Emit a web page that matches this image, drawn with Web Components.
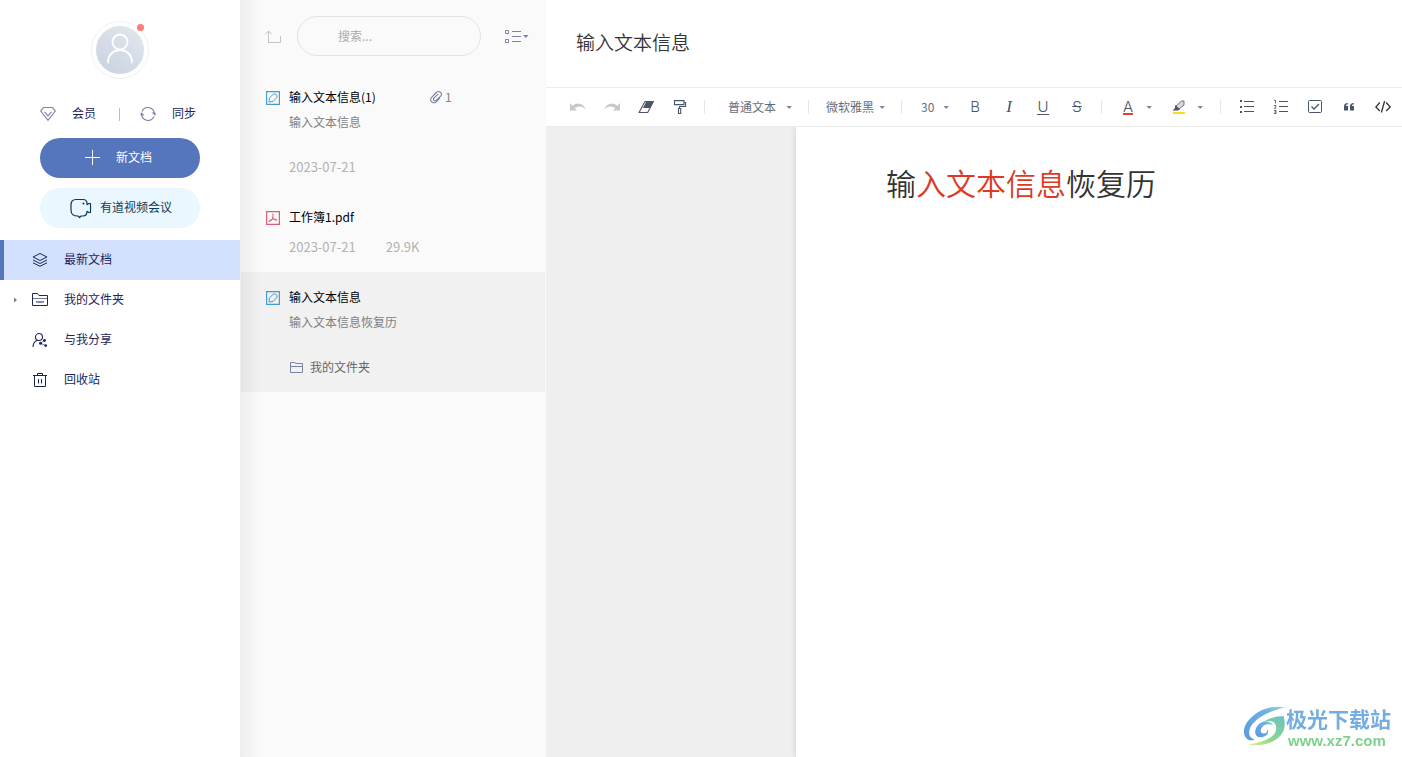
<!DOCTYPE html>
<html lang="zh-CN">
<head>
<meta charset="utf-8">
<title>笔记</title>
<style>
  html, body { margin: 0; height: 100%; }
  body {
    font: 12px/20px "Noto Sans CJK SC", sans-serif;
    background: #fff;
    color: #1b2559;
    --accent: #5575bd;
    --line: #ececec;
  }
</style>
</head>
<body>
<yn-app></yn-app>

<script>
const ICONS = {
  gem: [16, 16, '<path fill="none" stroke="currentColor" stroke-width="1.1" d="M3.5 1.5h9l2.8 3.6L8 14.3.7 5.1zM4.6 5.8 8 9.8l3.4-4"/>'],
  sync: [16, 16, '<path fill="none" stroke="currentColor" stroke-width="1.1" d="M2 5.4A6.5 6.5 0 0 1 14.4 8M14 10.6A6.5 6.5 0 0 1 1.6 8"/><path fill="currentColor" d="m11.600 6.600 4 0-.2 3.400zM4.600 9.200.5 9.600l.4-3.600z"/>'],
  plus: [16, 16, '<path fill="none" stroke="currentColor" d="M8.5 0v15M1 7.5h15"/>'],
  meeting: [24, 22, '<path fill="none" stroke="currentColor" stroke-width="1.200" stroke-linejoin="round" d="M8 2.500h7c2.500 0 4 1.500 4 4v1.200l1.800-1.200h1.700v9h-1.700L19 14.300c0 3-1.500 4.700-4 4.700H13L11.500 20.500 10 19c-4.500 0-7-1.500-7-6V8.500c0-4 1.500-6 5-6z"/><circle cx="15.500" cy="6.500" r="1" fill="currentColor"/>'],
  layers: [16, 16, '<path fill="none" stroke="currentColor" stroke-linejoin="round" d="M8 1.500 15 5 8 8.500 1 5zM1 8l7 3.500L15 8M1 10.800l7 3.500 7-3.500"/>'],
  folderLines: [16, 16, '<path fill="none" stroke="currentColor" d="M.5 13.500v-12h5l1.500 2h8.500v10zM4 10h8"/><path stroke="currentColor" opacity=".6" d="M.5 6.500h15"/>'],
  share: [16, 16, '<g fill="none" stroke="currentColor" stroke-width="1.100"><circle cx="7" cy="5" r="3.500"/><path d="M1 15C1 11.400 2.800 9.400 5.200 8.200"/><path stroke-width=".6" d="m8.500 11.200 4-2.700M8.500 11.200l5 2.400"/></g><g fill="currentColor"><circle cx="12.500" cy="8.500" r="1.400"/><circle cx="8.500" cy="11.200" r="1.500"/><circle cx="13.700" cy="13.600" r="1.400"/></g>'],
  trash: [16, 16, '<path fill="none" stroke="currentColor" d="M1 3.500h14M5.500 3V1.500h5V3M2.500 3.500v11h11v-11M6.500 7v4.500M9.500 7v4.500"/>'],
  caretRight: [8, 8, '<path fill="currentColor" d="M2 1.500v5l3-2.500z"/>'],
  caretDown: [8, 8, '<path fill="currentColor" d="M1.500 3h5.500L4.200 6z"/>'],
  up: [18, 16, '<path fill="none" stroke="currentColor" d="M1 5.500 4.500 2 8 5.500M4.500 2v11.500h12V7"/>'],
  view: [24, 16, '<path fill="none" stroke="currentColor" d="M.5 1.500h3v3h-3zM.5 10.500h3v3h-3zM7 2.500h9M7 7.500h9M7 12.500h9"/><path fill="currentColor" d="M18 6h5.500l-2.700 3z"/>'],
  note: [14, 14, '<path fill="none" stroke="currentColor" stroke-width="1.200" d="M.6.600h12.800v12.800H.6z"/><path fill="none" stroke="currentColor" d="m3 11 .4-4.200L7.600 3c2-.8 4 1.200 3.400 3.200L7 10.500z"/>'],
  pdf: [14, 14, '<path fill="none" stroke="currentColor" stroke-width="1.200" d="M.6.600h12.800v12.800H.6z"/><path fill="none" stroke="currentColor" d="M6.200 2.800c1.500 0 .8 2.200.6 3.400-.4 2-2 4.500-3.600 4.600-.8-.6.600-2 3.300-2.500 2.200-.4 4.500-.2 4.400.9-1.400.700-3.800-1-4.600-3.500"/>'],
  clip: [14, 14, '<path fill="none" stroke="currentColor" stroke-width="1.100" stroke-linecap="round" d="M10.700 8.200 7.200 11.800C4 14.600-.2 10.700 2.600 7.400L7.400 2.500c2.500-2.500 6.500.6 4.500 3.500L7.200 10.300c-1.700 1.500-3.700-.6-2.300-2.200L8.800 4.300"/>'],
  folder: [14, 14, '<path fill="none" stroke="currentColor" d="M1.500 12.500v-10h4l1.500 1h6.500v9zM1.500 6.500h12"/>'],
  undo: [16, 16, '<path fill="currentColor" d="M0 4v7.500h7L4.600 9C8.500 6.500 12.500 7 16 10.500 13.500 4.500 7.500 2.700 2.600 6.800z"/>'],
  redo: [16, 16, '<path fill="currentColor" d="M16 4v7.500H9L11.400 9C7.500 6.500 3.500 7 0 10.500 2.500 4.500 8.500 2.700 13.400 6.800z"/>'],
  eraser: [16, 16, '<path fill="none" stroke="currentColor" stroke-width="1.100" stroke-linejoin="round" d="M7 2.500h8.300L9.700 13.500H1z"/><path fill="currentColor" d="M7 2h9l-4 7H5L8 3z"/>'],
  roller: [16, 16, '<path fill="none" stroke="currentColor" stroke-width="1.100" d="M2.500 1.600h9.500v4H2.500zM12 3.500h1.600v4H7.500V9M6.500 9.500h2.200v5H6.500z"/>'],
  highlight: [16, 16, '<path fill="#d8d8d8" stroke="#4a5568" stroke-width=".8" d="M5 7 10.500 2H13v4L8 10z"/><path fill="#4a5568" d="m4 6 5 4.500-2 1H1.500L4 9z"/><path fill="#f8df1e" d="M2 13h12v2H2z"/>'],
  ul: [16, 16, '<path fill="currentColor" d="M1 1h2v2H1zM1 7h2v2H1zM1 12h2v2H1z"/><path stroke="currentColor" d="M5 2.500h10M5 7.500h10M5 12.500h10"/>'],
  ol: [16, 16, '<path stroke="currentColor" d="M6 2.500h9M6 7.500h9M6 12.500h9"/><path fill="none" stroke="currentColor" stroke-width=".9" d="M1 1.400h1.500v3M1 6.500h2v1l-1.700 1.700H3.300M1 11.500h2v3H1M1.500 13H3"/>'],
  check: [16, 16, '<rect x="1.500" y="1.500" width="13" height="12" rx="1" fill="none" stroke="currentColor"/><path fill="none" stroke="currentColor" stroke-width="1.300" d="M4.500 7.500 7 10l5-5"/>'],
  quote: [16, 16, '<path fill="currentColor" d="M3 7.500C3 5.500 4.200 4 6.800 4v1.200C5.500 5.300 5 6 5 7h2v4.500H3zM9 7.500C9 5.500 10.200 4 12.800 4v1.200C11.500 5.300 11 6 11 7h2v4.500H9z"/>'],
  code: [16, 16, '<path fill="none" stroke="currentColor" stroke-width="1.300" d="M4.800 3.500.8 8l4 4M11.200 3.500l4 4.500-4 4M9.600 2 6.400 13.500"/>']
};

function define(name, html, setup) {
  const tpl = document.createElement('template');
  tpl.innerHTML = html;
  customElements.define(name, class extends HTMLElement {
    constructor() {
      super();
      this.attachShadow({ mode: 'open' }).append(tpl.content.cloneNode(true));
    }
    connectedCallback() { if (setup) setup(this, this.shadowRoot); }
  });
}

define('yn-icon', `<style>:host{display:block;flex:none}svg{display:block}</style><div></div>`, (el, root) => {
  const [w, h, body] = ICONS[el.getAttribute('name')];
  root.querySelector('div').innerHTML =
    `<svg width="${w}" height="${h}" viewBox="0 0 ${w} ${h}" aria-hidden="true">${body}</svg>`;
});

define('yn-avatar', `
<style>
  :host { display: block; position: relative; width: 56px; height: 56px; border: 1px solid #f0f0f8; border-radius: 50%; }
  svg { display: block; margin: 4px; }
  i { position: absolute; top: 2px; right: 4px; width: 7px; height: 7px; border-radius: 50%; background: #ff7b79; }
</style>
<svg width="48" height="48" viewBox="0 0 48 48" aria-hidden="true">
  <defs><linearGradient id="g" x1="1" y1="0" x2=".3" y2="1"><stop offset="0" stop-color="#e4e8ee"/><stop offset="1" stop-color="#cbd4e1"/></linearGradient></defs>
  <circle cx="24" cy="24" r="24" fill="url(#g)"/>
  <g fill="none" stroke="#fff" stroke-width="1.800" stroke-linecap="round"><circle cx="24" cy="16" r="7.500"/><path d="M12 36.500C12 20 36 20 36 36.500"/></g>
</svg><i></i>`);

define('yn-nav-item', `
<style>
  :host { display: block; }
  a { display: flex; align-items: center; height: 40px; border-left: 4px solid transparent; color: #1b2559; text-decoration: none; }
  :host([active]) a { background: #d3e1ff; border-color: var(--accent); }
  .caret { width: 20px; padding-left: 8px; color: #7a819c; visibility: hidden; }
  :host([expandable]) .caret { visibility: visible; }
  slot { display: block; }
  .text { margin-left: 16px; padding-bottom: 2px; }
</style>
<a href="#"><span class="caret"><yn-icon name="caretRight"></yn-icon></span><span class="icon"></span><span class="text"><slot></slot></span></a>`,
(el, root) => { root.querySelector('.icon').innerHTML = `<yn-icon name="${el.getAttribute('icon')}"></yn-icon>`; });

define('yn-sidebar', `
<style>
  :host { display: flex; flex-direction: column; background: #fff; }
  yn-avatar { margin: 21px auto 0; }
  .quick { display: flex; align-items: center; margin: 25px 40px 0; height: 20px; }
  button { display: flex; align-items: center; border: 0; padding: 0; background: none; color: #1b2559; font: inherit; cursor: pointer; }
  button span { padding-bottom: 2px; }
  .quick yn-icon { color: #7b83a3; }
  .quick button { gap: 16px; }
  .quick hr { width: 1px; height: 13px; border: 0; margin: 0 20px 0 23px; background: #bbb; }
  .big { height: 40px; margin: 10px 40px 0; border-radius: 20px; justify-content: center; }
  .new { margin-top: 14px; gap: 16px; background: var(--accent); color: #fff; padding-right: 4px; }
  .meet { gap: 8px; background: #ebf7ff; color: #0f3a57; }
  nav { margin-top: 12px; }
</style>
<yn-avatar></yn-avatar>
<div class="quick">
  <button><yn-icon name="gem"></yn-icon><span>会员</span></button><hr>
  <button><yn-icon name="sync"></yn-icon><span>同步</span></button>
</div>
<button class="big new"><yn-icon name="plus"></yn-icon><span>新文档</span></button>
<button class="big meet"><yn-icon name="meeting"></yn-icon><span>有道视频会议</span></button>
<nav>
  <yn-nav-item icon="layers" active>最新文档</yn-nav-item>
  <yn-nav-item icon="folderLines" expandable>我的文件夹</yn-nav-item>
  <yn-nav-item icon="share">与我分享</yn-nav-item>
  <yn-nav-item icon="trash">回收站</yn-nav-item>
</nav>`);

define('yn-note-item', `
<style>
  :host { display: flex; gap: 9px; margin: 0 1px; padding: 15px 25px; }
  :host([selected]) { background: #f1f1f1; }
  .type { margin-top: 4px; color: #459bd8; }
  :host([kind="pdf"]) .type { color: #dc5f78; }
  .body { flex: 1; }
  .head { display: grid; grid-template-columns: 140px auto; color: #000; }
  ::slotted([slot="extra"]) { display: flex; align-items: center; gap: 2px; color: #7b83a3; }
  ::slotted([slot="summary"]) { display: block; padding: 5px 0 15px; color: #808080; }
  ::slotted([slot="meta"]) { display: flex; align-items: center; margin-top: 10px; gap: 30px; font-size: 13px; color: #b2b2b2; }
  ::slotted([slot="path"]) { display: flex; align-items: center; margin-top: 10px; gap: 7px; color: #666; }
</style>
<span class="type"></span>
<div class="body"><div class="head"><slot></slot><slot name="extra"></slot></div><slot name="summary"></slot><slot name="meta"></slot><slot name="path"></slot></div>`,
(el, root) => { root.querySelector('.type').innerHTML = `<yn-icon name="${el.getAttribute('kind')}"></yn-icon>`; });

define('yn-note-list', `
<style>
  :host { display: block; position: relative; background: #fafafa; }
  :host::after { content: ""; position: absolute; inset: 0 auto 0 0; width: 22px; pointer-events: none; background: linear-gradient(90deg, rgba(0,0,0,.05), rgba(0,0,0,0)); }
  header { display: flex; align-items: center; height: 72px; padding: 0 17px 0 24px; box-sizing: border-box; }
  .plain { border: 0; padding: 1px 0 0; background: none; color: #7b83a3; }
  .up { color: #c4c4c4; }
  input { flex: 1; min-width: 0; height: 40px; box-sizing: border-box; margin: 0 24px 0 15px; padding: 0 40px 2px; border: 1px solid #e4e4e4; border-radius: 20px; background: transparent; font: inherit; outline: none; }
  input::placeholder { color: #ababab; }
  .count { color: #8a8178; }
  .place { color: #7b83a3; }
</style>
<header>
  <button class="plain up" aria-label="上级目录"><yn-icon name="up"></yn-icon></button>
  <input type="search" placeholder="搜索..." aria-label="搜索">
  <button class="plain" aria-label="视图"><yn-icon name="view"></yn-icon></button>
</header>
<yn-note-item kind="note">输入文本信息(1)<span slot="extra"><yn-icon name="clip"></yn-icon><span class="count">1</span></span><span slot="summary">输入文本信息</span><span slot="meta">2023-07-21</span></yn-note-item>
<yn-note-item kind="pdf">工作簿1.pdf<span slot="meta"><span>2023-07-21</span><span>29.9K</span></span></yn-note-item>
<yn-note-item kind="note" selected>输入文本信息<span slot="summary">输入文本信息恢复历</span><span slot="path"><yn-icon class="place" name="folder"></yn-icon>我的文件夹</span></yn-note-item>`);

define('yn-toolbar', `
<style>
  :host { display: flex; align-items: center; height: 38px; padding-left: 15px; border-bottom: 1px solid var(--line); color: #4a5568; overflow: hidden; }
  button { flex: none; display: flex; align-items: center; justify-content: center; width: 34px; height: 32px; border: 0; padding: 0; background: none; color: inherit; font: 300 15px/16px Inter, sans-serif; }
  button:disabled { color: #c8c8c8; }
  hr { flex: none; width: 1px; height: 14px; border: 0; margin: 0 9px 0 7px; background: #e6e6e6; }
  .pick { position: relative; flex: none; display: flex; align-items: center; box-sizing: border-box; }
  .style { width: 87px; padding-left: 14px; }
  .font { width: 76px; padding-left: 8px; }
  .size { width: 47px; padding-left: 10px; }
  select { appearance: none; border: 0; padding: 0; margin: 0; width: 100%; background: none; color: #666d7c; font: inherit; height: 20px; }
  .pick yn-icon { position: absolute; right: 8px; pointer-events: none; }
  yn-icon[name="caretDown"] { color: #8088a0; }
  .drop { width: 17px; justify-content: flex-start; }
  .i { font: italic 17px/16px "Liberation Serif", serif; }
  .u span { border-bottom: 1px solid; line-height: 14px; }
  .s { text-decoration: line-through; }
  .a span { border-bottom: 2px solid #e2402b; line-height: 13px; }
  .code { color: #333; }
</style>
<button disabled aria-label="撤销"><yn-icon name="undo"></yn-icon></button>
<button disabled aria-label="重做"><yn-icon name="redo"></yn-icon></button>
<button aria-label="清除格式"><yn-icon name="eraser"></yn-icon></button>
<button aria-label="格式刷"><yn-icon name="roller"></yn-icon></button>
<hr>
<span class="pick style"><select aria-label="段落样式"><option>普通文本</option></select><yn-icon name="caretDown"></yn-icon></span>
<hr>
<span class="pick font"><select aria-label="字体"><option>微软雅黑</option></select><yn-icon name="caretDown"></yn-icon></span>
<hr>
<span class="pick size"><select aria-label="字号"><option>30</option></select><yn-icon name="caretDown"></yn-icon></span>
<button aria-label="加粗">B</button>
<button class="i" aria-label="斜体">I</button>
<button class="u" aria-label="下划线"><span>U</span></button>
<button class="s" aria-label="删除线">S</button>
<hr>
<button class="a" aria-label="文字颜色"><span>A</span></button>
<button class="drop" aria-label="更多文字颜色"><yn-icon name="caretDown"></yn-icon></button>
<button aria-label="背景颜色"><yn-icon name="highlight"></yn-icon></button>
<button class="drop" aria-label="更多背景颜色"><yn-icon name="caretDown"></yn-icon></button>
<hr>
<button aria-label="无序列表"><yn-icon name="ul"></yn-icon></button>
<button aria-label="有序列表"><yn-icon name="ol"></yn-icon></button>
<button aria-label="待办"><yn-icon name="check"></yn-icon></button>
<button aria-label="引用"><yn-icon name="quote"></yn-icon></button>
<button class="code" aria-label="代码"><yn-icon name="code"></yn-icon></button>`);

define('yn-editor', `
<style>
  :host { display: flex; flex-direction: column; min-width: 0; background: #fff; }
  h1 { margin: 0; padding: 28px 30px 31px; border-bottom: 1px solid var(--line); font-size: 19px; line-height: 28px; font-weight: 350; color: #333; }
  .canvas { flex: 1; display: flex; padding-left: 250px; background: #efefef; overflow: hidden; }
  article { flex: 1; padding: 34px 90px; background: #fff; box-shadow: 0 0 6px rgba(0,0,0,.15); }
  p { margin: 0; font-size: 30px; line-height: 42px; font-weight: 350; color: #333; }
  b { font-weight: inherit; color: #db3a27; }
</style>
<h1>输入文本信息</h1>
<yn-toolbar></yn-toolbar>
<div class="canvas"><article><p>输<b>入文本信息</b>恢复历</p></article></div>`);

define('yn-watermark', `
<style>
  :host { position: fixed; right: 11px; bottom: 8px; display: flex; align-items: center; pointer-events: none; }
  .text { display: flex; flex-direction: column; }
  strong { font-size: 21px; line-height: 30px; color: #74aee0; }
  span { font: bold 15px/16px "Liberation Sans", sans-serif; color: #7fd08f; margin-left: 2px; }
</style>
<svg width="43" height="42" viewBox="0 0 44 42" aria-hidden="true">
  <defs>
    <linearGradient id="a" x1="0" y1="1" x2="1" y2="0"><stop offset="0" stop-color="#5b9bdc"/><stop offset=".7" stop-color="#6cb0e4"/><stop offset="1" stop-color="#9fdccb"/></linearGradient>
    <linearGradient id="b" x1="0" y1="1" x2="1" y2="0"><stop offset="0" stop-color="#e4ea90"/><stop offset=".4" stop-color="#8ed98a"/><stop offset="1" stop-color="#6cc0c4"/></linearGradient>
  </defs>
  <path fill="url(#a)" d="M43 2C31 0 20 3 11 10 1 18-2 28 4 34c2 2 5 2 8 1-5-2-7-5-5-11C10 15 24 6 43 2z"/>
  <path fill="url(#a)" d="M31 20c-5-7-15-4-18 4-2 6 2 10 8 8 4-1 6-5 4-8 0 4-3 6-6 4-2-2 0-6 3-8 3-1 6-1 9 0z"/>
  <path fill="url(#b)" d="M42 11c-9 0-16 2-21 6 8-3 13 0 13 6 0 9-11 14-29 17 16 3 31-3 36-13 3-7 1-12 1-16z"/>
</svg>
<div class="text"><strong>极光下载站</strong><span>www.xz7.com</span></div>`);

define('yn-app', `
<style>
  :host { display: grid; grid-template-columns: 240px 306px minmax(0, 1fr); min-height: 100vh; }
</style>
<yn-sidebar></yn-sidebar><yn-note-list></yn-note-list><yn-editor></yn-editor><yn-watermark></yn-watermark>`);
</script>
</body>
</html>
